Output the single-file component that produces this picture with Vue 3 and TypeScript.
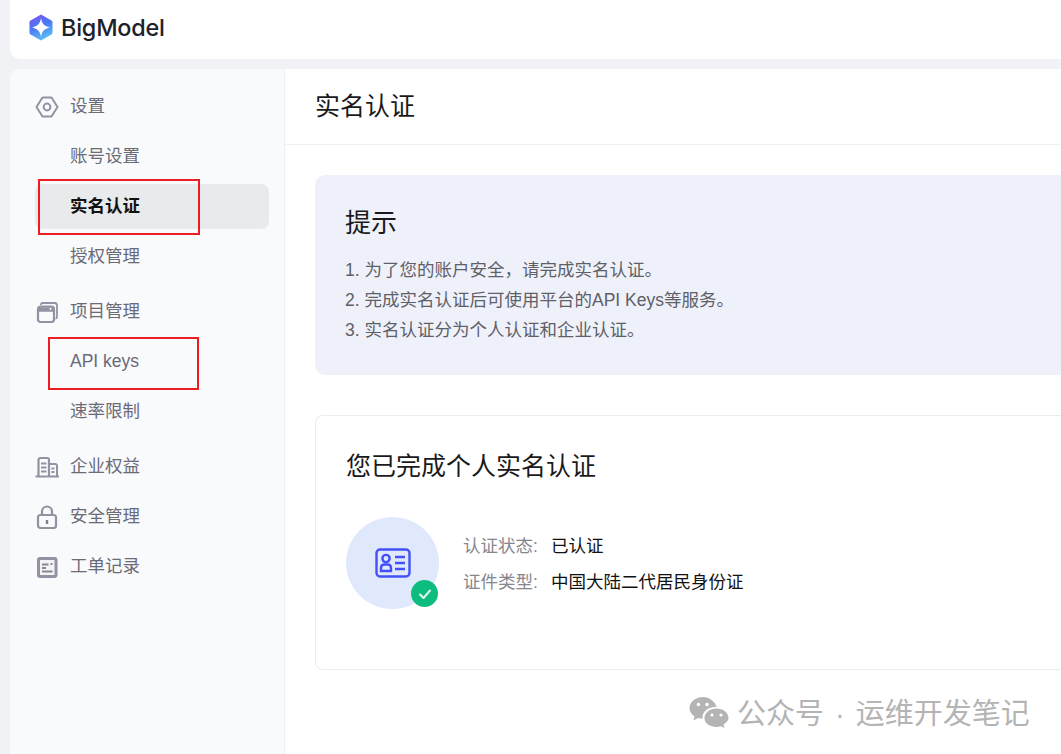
<script setup lang="ts">
interface NavItem { label: string; active?: boolean; latin?: boolean }
interface NavGroup { title: string; icon: string; children: NavItem[] }

const groups: NavGroup[] = [
  { title: '设置', icon: 'gear', children: [{ label: '账号设置' }, { label: '实名认证', active: true }, { label: '授权管理' }] },
  { title: '项目管理', icon: 'window', children: [{ label: 'API keys', latin: true }, { label: '速率限制' }] },
  { title: '企业权益', icon: 'building', children: [] },
  { title: '安全管理', icon: 'lock', children: [] },
  { title: '工单记录', icon: 'ticket', children: [] },
]
const tips = ['1. 为了您的账户安全，请完成实名认证。', '2. 完成实名认证后可使用平台的API Keys等服务。', '3. 实名认证分为个人认证和企业认证。']
const facts = [
  { k: '认证状态:', v: '已认证' },
  { k: '证件类型:', v: '中国大陆二代居民身份证' },
]
</script>

<template>
  <div class="page">
    <header class="topbar">
      <svg class="logo" width="24" height="27" viewBox="0 0 24 27">
        <defs>
          <linearGradient id="lg" x1="0.2" y1="0" x2="0.6" y2="1">
            <stop offset="0" stop-color="#7a55ee" />
            <stop offset="0.45" stop-color="#4a78f5" />
            <stop offset="1" stop-color="#5cc2f5" />
          </linearGradient>
        </defs>
        <path d="M12 0.5 L22.5 6.5 Q23.5 7.2 23.5 8.2 V18.8 Q23.5 19.8 22.5 20.5 L12 26.5 L1.5 20.5 Q0.5 19.8 0.5 18.8 V8.2 Q0.5 7.2 1.5 6.5 Z" fill="url(#lg)" />
        <path d="M12 4 C12.8 9.5 15.5 12.4 21 13.5 C15.5 14.6 12.8 17.5 12 23 C11.2 17.5 8.5 14.6 3 13.5 C8.5 12.4 11.2 9.5 12 4 Z" fill="#fff" />
      </svg>
      <span class="brand">BigModel</span>
    </header>

    <div class="body">
      <aside class="sidebar">
        <div v-for="g in groups" :key="g.title" class="group">
          <div class="row title">
            <svg class="icon" width="24" height="24" viewBox="0 0 24 24" fill="none" stroke="#9292a2" stroke-width="2">
              <template v-if="g.icon === 'gear'">
                <path d="M7.5 2.5 H16.5 L22.5 12 L16.5 21.5 H7.5 L1.5 12 Z" stroke-linejoin="round" />
                <circle cx="12" cy="12" r="3.4" />
              </template>
              <template v-else-if="g.icon === 'window'">
                <path d="M6 5 V4.5 Q6 3 7.5 3 H19.5 Q22 3 22 5.5 V17 Q22 18.5 20.5 18.5" stroke-width="1.8" />
                <rect x="3" y="6.5" width="16" height="15.5" rx="2.5" stroke-width="2.2" />
                <path d="M3 9.5 H19" stroke-width="4.5" />
                <circle cx="15.5" cy="9" r="1" fill="#fff" stroke="none" />
              </template>
              <template v-else-if="g.icon === 'building'">
                <path d="M3.5 21 V5 Q3.5 3 5.5 3 H12 Q14 3 14 5 V21" stroke-width="2.2" />
                <path d="M14 9 H20 Q22 9 22 11 V21" stroke-width="2" />
                <path d="M6 8.5 H11.5 M6 12.5 H11.5 M6 16.5 H11.5 M16.5 13.5 H19.5 M16.5 17 H19.5" stroke-width="2" />
                <path d="M0.5 21.5 H24" stroke-width="2" />
              </template>
              <template v-else-if="g.icon === 'lock'">
                <rect x="3" y="10" width="18" height="13" rx="2.5" stroke-width="2.2" />
                <path d="M7 10 V6.5 A5 5 0 0 1 17 6.5 V10" stroke-width="2.2" />
                <path d="M12 15 V19" stroke="#7f7f8e" stroke-width="2.4" />
              </template>
              <template v-else>
                <rect x="3.5" y="3.5" width="17.5" height="18" rx="1.5" stroke-width="3" fill="#f4f4f6" />
                <path d="M7 9.5 H13.5 M7 13 H11 M7 16.5 H17.5" stroke-width="1.8" stroke="#85858f" />
                <path d="M15.5 9 H17.5" stroke-width="1.8" stroke="#85858f" />
              </template>
            </svg>
            <span class="cjk">{{ g.title }}</span>
          </div>
          <div v-for="c in g.children" :key="c.label" class="row child" :class="{ active: c.active }">
            <span :class="{ cjk: !c.latin }">{{ c.label }}</span>
          </div>
        </div>
        <div class="mark mark-a"></div>
        <div class="mark mark-b"></div>
      </aside>

      <main class="main">
        <h1 class="head"><span class="head-text">实名认证</span></h1>
        <div class="content">
          <section class="tip">
            <h2>提示</h2>
            <p v-for="t in tips" :key="t">{{ t }}</p>
          </section>
          <section class="card">
            <h2>您已完成个人实名认证</h2>
            <div class="info">
              <div class="avatar">
                <svg width="36" height="30" viewBox="0 0 36 30" fill="none" stroke="#4350fa" stroke-width="2.4">
                  <rect x="1.5" y="1.5" width="33" height="27" rx="3.5" />
                  <circle cx="11" cy="10.5" r="3.6" />
                  <path d="M6 23 V20 Q6 16.5 9.5 16.5 H12.5 Q16 16.5 16 20 V23 Z" />
                  <path d="M20 9 H30 M20 15 H30 M20 21 H30" />
                </svg>
                <span class="badge">
                  <svg width="16" height="16" viewBox="0 0 16 16" fill="none" stroke="#e8f8f1" stroke-width="2" stroke-linecap="round" stroke-linejoin="round"><path d="M3 8.5 L6.5 12 L13 4.5" /></svg>
                </span>
              </div>
              <dl class="facts">
                <div v-for="f in facts" :key="f.k" class="fact"><dt>{{ f.k }}</dt><dd>{{ f.v }}</dd></div>
              </dl>
            </div>
          </section>
        </div>
      </main>
    </div>

    <div class="watermark">
      <svg width="40" height="32" viewBox="0 0 40 32" fill="#b4b4b4">
        <path d="M14 1 C6.5 1 0.5 6 0.5 12 C0.5 15.5 2.5 18.5 5.5 20.5 L4.5 24.5 L9 22 C10.5 22.5 12 22.7 13.5 22.7 C13 15 20 10.5 27.5 11 C26 5.5 20.5 1 14 1 Z" />
        <path d="M27.5 12.5 C21 12.5 15.5 16.7 15.5 22 C15.5 27.3 21 31 27.5 31 C29 31 30 30.8 31.5 30.3 L35.5 32 L34.5 28.5 C37.5 26.5 39.5 24.5 39.5 22 C39.5 16.7 34 12.5 27.5 12.5 Z" />
        <circle cx="9.5" cy="8.5" r="1.8" fill="#fff" /><circle cx="18" cy="8.5" r="1.8" fill="#fff" />
        <circle cx="23" cy="19" r="1.6" fill="#fff" /><circle cx="32" cy="19" r="1.6" fill="#fff" />
      </svg>
      <span class="wm-text">公众号 · 运维开发笔记</span>
    </div>
  </div>
</template>

<style>
html, body { margin: 0; background: #f1f2f6; overflow: hidden; }
</style>

<style scoped>
* { box-sizing: border-box; }
.page {
  position: relative;
  width: 1061px;
  height: 754px;
  overflow: hidden;
  padding-left: 10px;
  background: #f1f2f6;
  font-family: "Liberation Sans", "Noto Sans CJK SC", sans-serif;
}
.topbar {
  display: flex;
  align-items: center;
  gap: 8px;
  height: 59px;
  margin-right: -20px;
  margin-bottom: 10px;
  padding: 0 0 5px 19px;
  background: #fff;
  border-radius: 0 0 10px 10px;
}
.brand {
  font-family: Inter, sans-serif;
  font-size: 23.4px;
  font-weight: 500;
  letter-spacing: -0.2px;
  color: #1d2129;
}
.body {
  display: flex;
  height: 700px;
  margin-right: -20px;
  background: #fff;
  border-radius: 10px 0 0 0;
  overflow: hidden;
}
.sidebar {
  position: relative;
  flex: 0 0 275px;
  padding: 15px 15px 0 25px;
  background: #f9fafc;
  border-right: 1px solid #eeeff2;
}
.group { margin-bottom: 10px; }
.group:nth-child(n+3) { margin-bottom: 5px; }
.row {
  display: flex;
  align-items: center;
  height: 45px;
  font-size: 17.5px;
  color: #6b6b78;
}
.cjk { margin-bottom: 4px; }
.title { gap: 11px; margin-bottom: 5px; }
.title:last-child { margin-bottom: 0; }
.child { padding-left: 35px; margin-bottom: 5px; border-radius: 8px; }
.child:last-child { margin-bottom: 0; }
.child.active { background: #e9eaec; color: #111; font-weight: 700; }
.icon { flex: none; }
.mark { position: absolute; border: 2px solid #ec1c24; }
.mark-a { left: 28px; top: 110px; width: 162px; height: 56px; }
.mark-b { left: 38px; top: 268px; width: 151px; height: 53px; }
.main { flex: 1; min-width: 0; }
.head {
  display: flex;
  align-items: center;
  height: 76px;
  margin: 0;
  padding-left: 30px;
  border-bottom: 1px solid #f0f0f2;
  font-size: 25px;
  font-weight: 400;
  color: #1a1a1a;
}
.head-text { margin-bottom: 6px; }
.content { padding: 30px 0 0 30px; }
.tip {
  height: 200px;
  padding: 30px 30px 0;
  margin-bottom: 40px;
  background: #eef1fa;
  border-radius: 10px 0 0 10px;
}
.tip h2 {
  margin: 0 0 14px;
  height: 36px;
  line-height: 36px;
  font-size: 26px;
  font-weight: 400;
  color: #1a1a1a;
}
.tip p {
  margin: 0;
  line-height: 30px;
  font-size: 17.5px;
  color: #5f5f68;
}
.card {
  height: 255px;
  padding: 32px 30px 0;
  background: #fff;
  border: 1px solid #ececee;
  border-right: 0;
  border-radius: 8px 0 0 8px;
}
.card h2 {
  margin: 0 0 33px;
  height: 36px;
  line-height: 36px;
  font-size: 25px;
  font-weight: 400;
  color: #1a1a1a;
}
.info { display: flex; align-items: flex-start; gap: 24px; }
.avatar {
  position: relative;
  display: flex;
  align-items: center;
  justify-content: center;
  flex: none;
  width: 93px;
  height: 92px;
  border-radius: 50%;
  background: #dfe9fb;
}
.badge {
  position: absolute;
  right: 1px;
  bottom: 2px;
  display: flex;
  align-items: center;
  justify-content: center;
  width: 27px;
  height: 27px;
  border-radius: 50%;
  background: #0dbd7d;
}
.facts { margin: 9px 0 0; }
.fact { display: flex; height: 36px; align-items: center; font-size: 17.5px; }
.fact dt { width: 88px; color: #86868e; }
.fact dd { margin: 0; color: #111; }
.watermark {
  position: absolute;
  left: 689px;
  top: 690px;
  display: flex;
  align-items: center;
  gap: 8px;
  font-size: 29px;
  word-spacing: 3px;
  color: #b4b4b4;
  white-space: nowrap;
}
.wm-text { margin-bottom: 2px; }
</style>
